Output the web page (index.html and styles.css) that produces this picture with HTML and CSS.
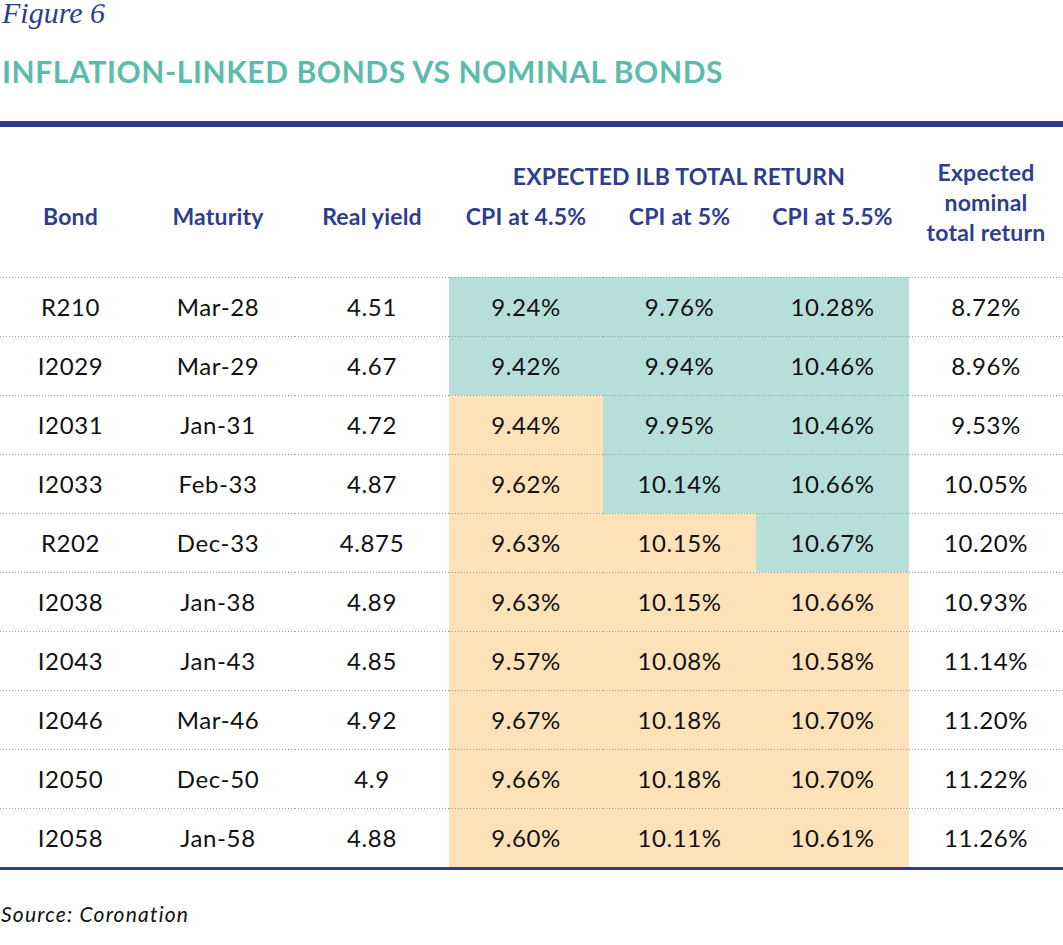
FILE: index.html
```html
<!DOCTYPE html>
<html lang="en">
<head>
<meta charset="utf-8">
<title>Figure 6 - Inflation-linked bonds vs nominal bonds</title>
<link rel="stylesheet" href="styles.css">
</head>
<body>
<div class="page">
  <div class="fig">Figure 6</div>
  <h1 class="title">INFLATION-LINKED BONDS VS NOMINAL BONDS</h1>
  <table class="bonds">
    <colgroup>
      <col class="c1"><col class="c2"><col class="c3"><col class="c4"><col class="c5"><col class="c6"><col class="c7">
    </colgroup>
    <thead>
      <tr class="h1">
        <th></th><th></th><th></th>
        <th colspan="3" class="group">EXPECTED ILB TOTAL RETURN</th>
        <th rowspan="2" class="nom">Expected<br>nominal<br>total return</th>
      </tr>
      <tr class="h2">
        <th>Bond</th><th>Maturity</th><th>Real yield</th>
        <th>CPI at 4.5%</th><th>CPI at 5%</th><th>CPI at 5.5%</th>
      </tr>
    </thead>
    <tbody>
      <tr><td>R210</td><td>Mar-28</td><td>4.51</td><td class="t">9.24%</td><td class="t">9.76%</td><td class="t">10.28%</td><td>8.72%</td></tr>
      <tr><td>I2029</td><td>Mar-29</td><td>4.67</td><td class="t">9.42%</td><td class="t">9.94%</td><td class="t">10.46%</td><td>8.96%</td></tr>
      <tr><td>I2031</td><td>Jan-31</td><td>4.72</td><td class="o">9.44%</td><td class="t">9.95%</td><td class="t">10.46%</td><td>9.53%</td></tr>
      <tr><td>I2033</td><td>Feb-33</td><td>4.87</td><td class="o">9.62%</td><td class="t">10.14%</td><td class="t">10.66%</td><td>10.05%</td></tr>
      <tr><td>R202</td><td>Dec-33</td><td>4.875</td><td class="o">9.63%</td><td class="o">10.15%</td><td class="t">10.67%</td><td>10.20%</td></tr>
      <tr><td>I2038</td><td>Jan-38</td><td>4.89</td><td class="o">9.63%</td><td class="o">10.15%</td><td class="o">10.66%</td><td>10.93%</td></tr>
      <tr><td>I2043</td><td>Jan-43</td><td>4.85</td><td class="o">9.57%</td><td class="o">10.08%</td><td class="o">10.58%</td><td>11.14%</td></tr>
      <tr><td>I2046</td><td>Mar-46</td><td>4.92</td><td class="o">9.67%</td><td class="o">10.18%</td><td class="o">10.70%</td><td>11.20%</td></tr>
      <tr><td>I2050</td><td>Dec-50</td><td>4.9</td><td class="o">9.66%</td><td class="o">10.18%</td><td class="o">10.70%</td><td>11.22%</td></tr>
      <tr><td>I2058</td><td>Jan-58</td><td>4.88</td><td class="o">9.60%</td><td class="o">10.11%</td><td class="o">10.61%</td><td>11.26%</td></tr>
    </tbody>
  </table>
  <p class="source">Source: Coronation</p>
</div>
</body>
</html>
```

FILE: styles.css
```css
html, body {
  margin: 0;
  padding: 0;
  background: #ffffff;
}

.page {
  width: 1063px;
  font-family: "Lato", "Liberation Sans", sans-serif;
}

.fig {
  margin: 0 0 0 2px;
  font-family: "Liberation Serif", serif;
  font-style: italic;
  font-size: 30px;
  line-height: 26px;
  color: #2e3d8e;
}

.title {
  margin: 27px 0 0 2px;
  font-family: "Lato", sans-serif;
  font-weight: 700;
  font-size: 30px;
  line-height: 36px;
  letter-spacing: 0.6px;
  color: #5cbcac;
}

.bonds {
  margin-top: 32px;
  width: 1063px;
  table-layout: fixed;
  border-collapse: collapse;
  border-spacing: 0;
  border-top: 6px solid #2e3d8e;
  border-bottom: 3px solid #2e3d8e;
}

.c1 { width: 141px; }
.c2, .c3, .c4, .c7 { width: 154px; }
.c5, .c6 { width: 153px; }

.bonds th {
  padding: 0;
  font-weight: 700;
  font-size: 23px;
  line-height: 30px;
  color: #2e3d8e;
  text-align: center;
  vertical-align: top;
  letter-spacing: 0.2px;
}

.h1 { height: 70px; }
.h1 .group { padding-top: 34px; }
.h2 { height: 83px; }
.h2 th { padding-top: 7px; }
.bonds th.nom { vertical-align: top; padding-top: 30px; }

.bonds td {
  height: 59px;
  padding: 0;
  font-size: 24px;
  color: #111111;
  text-align: center;
  vertical-align: middle;
  letter-spacing: 0.6px;
  background-image: linear-gradient(to right, #9c9c9c 1px, transparent 1px);
  background-size: 3px 1px;
  background-repeat: repeat-x;
  background-position: 0 0;
}

.bonds td.t { background-color: #b7dfda; }
.bonds td.o { background-color: #fce1b9; }

.source {
  margin: 31px 0 0 1px;
  font-style: italic;
  font-size: 21px;
  line-height: 26px;
  letter-spacing: 1.2px;
  color: #111111;
}
```
